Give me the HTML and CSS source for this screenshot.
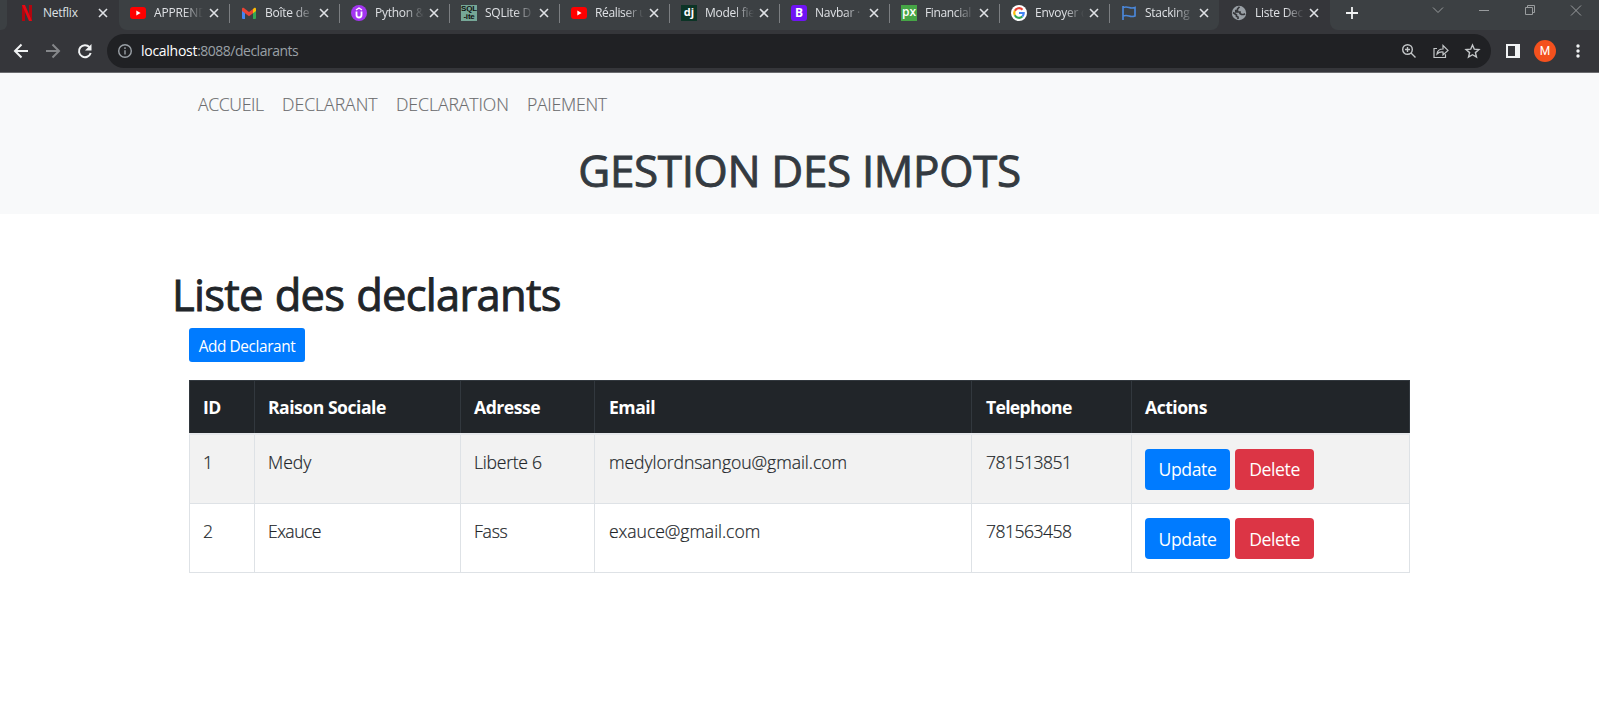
FILE: index.html
```html
<!DOCTYPE html>
<html lang="fr">
<head>
<meta charset="utf-8">
<title>Liste Declarants</title>
<link rel="stylesheet" href="styles.css">
</head>
<body>
<div class="browser">
  <div class="tabs">
    <div class="lead"></div>
    <div class="tab current first"><span class="fav"><svg width="16" height="16" viewBox="0 0 16 16"><path d="M2 0h3v16H2zM9 0h3v16H9z" fill="#b1060f"/><path d="M2 0h3l7 16H9z" fill="#e50914"/></svg></span><span class="name short">Netflix</span><svg class="x" viewBox="0 0 10 10"><path d="M1 1l8 8M9 1L1 9"/></svg></div>
    <div class="group">
    <div class="tab"><span class="fav"><svg width="16" height="16" viewBox="0 0 16 16"><rect x="-1" y="2" width="16" height="12" rx="3" fill="#f00"/><path d="M5.300 5.400L9.600 8l-4.300 2.600z" fill="#fff"/></svg></span><span class="name caps">APPREND</span><svg class="x" viewBox="0 0 10 10"><path d="M1 1l8 8M9 1L1 9"/></svg></div>
    <div class="tab"><span class="fav"><svg width="16" height="16" viewBox="0 0 16 16"><path d="M1 4h3v10H2a1 1 0 0 1-1-1z" fill="#4285f4"/><path d="M12 4h3v9a1 1 0 0 1-1 1h-2z" fill="#34a853"/><path d="M12 4l1.400-1.200Q15 2.200 15 4v2l-3 2.200z" fill="#fbbc04"/><path d="M4 8.200L1 6V4q0-1.800 1.600-1.200L8 7l4-3v4.200l-4 3z" fill="#ea4335"/></svg></span><span class="name">Boîte de</span><svg class="x" viewBox="0 0 10 10"><path d="M1 1l8 8M9 1L1 9"/></svg></div>
    <div class="tab"><span class="fav"><svg width="16" height="16" viewBox="0 0 16 16"><circle cx="8" cy="8" r="8" fill="#a435f0"/><path d="M5 5l3-2 3 2" fill="none" stroke="#fff" stroke-width="1.300"/><path d="M5.500 6.500v3.500q0 2.500 2.500 2.500t2.500-2.500V6.500" fill="none" stroke="#fff" stroke-width="1.800"/></svg></span><span class="name">Python &amp;</span><svg class="x" viewBox="0 0 10 10"><path d="M1 1l8 8M9 1L1 9"/></svg></div>
    <div class="tab"><span class="fav sql"><b>SQL</b><b>-ite</b></span><span class="name">SQLite D</span><svg class="x" viewBox="0 0 10 10"><path d="M1 1l8 8M9 1L1 9"/></svg></div>
    <div class="tab"><span class="fav"><svg width="16" height="16" viewBox="0 0 16 16"><rect y="2" width="16" height="12" rx="3" fill="#f00"/><path d="M6.300 5.400L10.600 8l-4.300 2.600z" fill="#fff"/></svg></span><span class="name tight">Réaliser u</span><svg class="x" viewBox="0 0 10 10"><path d="M1 1l8 8M9 1L1 9"/></svg></div>
    <div class="tab"><span class="fav dj">dj</span><span class="name">Model fie</span><svg class="x" viewBox="0 0 10 10"><path d="M1 1l8 8M9 1L1 9"/></svg></div>
    <div class="tab"><span class="fav bs">B</span><span class="name">Navbar ·</span><svg class="x" viewBox="0 0 10 10"><path d="M1 1l8 8M9 1L1 9"/></svg></div>
    <div class="tab"><span class="fav px">px</span><span class="name tight">Financial</span><svg class="x" viewBox="0 0 10 10"><path d="M1 1l8 8M9 1L1 9"/></svg></div>
    <div class="tab"><span class="fav"><svg width="16" height="16" viewBox="0 0 16 16"><circle cx="8" cy="8" r="8" fill="#fff"/><g fill="none" stroke-width="2.200"><path d="M11.500 4.700A4.800 4.800 0 0 0 3.800 5.700" stroke="#ea4335"/><path d="M3.800 5.700a4.800 4.800 0 0 0 0 4.600" stroke="#fbbc05"/><path d="M3.800 10.300a4.800 4.800 0 0 0 7.500 1.200" stroke="#34a853"/><path d="M11.300 11.500A4.800 4.800 0 0 0 12.700 8H8" stroke="#4285f4"/></g></svg></span><span class="name">Envoyer d</span><svg class="x" viewBox="0 0 10 10"><path d="M1 1l8 8M9 1L1 9"/></svg></div>
    <div class="tab nosep"><span class="fav"><svg width="16" height="16" viewBox="0 0 16 16"><path d="M2 1v14M2 2.500q3-1 6 0t6 0v8.500q-3 1-6 0t-6 0" fill="none" stroke="#4a86d8" stroke-width="1.700"/></svg></span><span class="name">Stacking</span><svg class="x" viewBox="0 0 10 10"><path d="M1 1l8 8M9 1L1 9"/></svg></div>
    </div>
    <div class="tab current last"><span class="fav"><svg width="16" height="16" viewBox="0 0 16 16"><circle cx="8" cy="8" r="7.200" fill="#9aa0a6"/><path d="M8.500 1.800L6.500 4v1.500H4.800V7H9v1.500l1.500 1h2.300l1.200-.8M2 7.500l3.500 2.500v1.500L7 12v2" fill="none" stroke="#35363a" stroke-width="1.700"/></svg></span><span class="name">Liste Dec</span><svg class="x" viewBox="0 0 10 10"><path d="M1 1l8 8M9 1L1 9"/></svg></div>
    <div class="tail">
      <svg class="plus" viewBox="0 0 12 12"><path d="M6 0v12M0 6h12"/></svg>
      <svg class="win" viewBox="0 0 160 20"><path d="M5 7.500l5 5 5-5M51 10.500h10M97.500 7.500h7v7h-7zM99.500 7.500v-2h7v7h-2M143 5.500l10 10M153 5.500l-10 10"/></svg>
    </div>
  </div>
  <div class="toolbar">
    <svg class="navicons" viewBox="0 0 90 20"><g fill="none" stroke-width="2"><path d="M15 10H2M8.500 3.500L2 10l6.500 6.500" stroke="#f1f3f4"/><path d="M33 10h13M39.500 3.500L46 10l-6.500 6.500" stroke="#85878a"/><path d="M76.500 6.200A6 6 0 1 0 77.700 12" stroke="#f1f3f4"/></g><path d="M78.500 3v6.500H72z" fill="#f1f3f4"/></svg>
    <div class="address">
      <svg class="info" viewBox="0 0 16 16"><circle cx="8" cy="8" r="6.300"/><path d="M8 7.200v4.300M8 4.300v1.600"/></svg>
      <span class="url"><em>localhost</em>:8088/declarants</span>
      <svg class="acts" viewBox="0 0 80 16"><g fill="none" stroke="#c4c7c9" stroke-width="1.400"><circle cx="6.500" cy="6.500" r="4.800"/><path d="M10 10l4.500 4.500M4 6.500h5M6.500 4v5"/><path d="M36 5.500H33v9h11.500v-3.200M36 11q.500-5 6-5V2.500l5 4.900-5 4.600V9q-4-.300-6 2z" stroke-width="1.200"/><path d="M71.500 2l1.800 4.200 4.600.400-3.500 3 1.100 4.500-4-2.400-4 2.400 1.100-4.500-3.500-3 4.600-.400z"/></g></svg>
    </div>
    <svg class="panel" viewBox="0 0 14 14"><path d="M1 1h12v12H1z" fill="none" stroke="#f1f3f4" stroke-width="2"/><path d="M9 1h4v12H9z" fill="#f1f3f4"/></svg>
    <span class="avatar">M</span>
    <svg class="dots" viewBox="0 0 4 14"><circle cx="2" cy="2" r="1.700"/><circle cx="2" cy="7" r="1.700"/><circle cx="2" cy="12" r="1.700"/></svg>
  </div>
</div>
<header class="header">
  <nav class="menu"><a class="m1">ACCUEIL</a><a class="m2">DECLARANT</a><a class="m3">DECLARATION</a><a class="m4">PAIEMENT</a></nav>
  <h1 class="brand">GESTION DES IMPOTS</h1>
</header>
<main class="content">
  <h1 class="title">Liste des declarants</h1>
  <a class="btn small">Add Declarant</a>
  <table class="list">
    <colgroup><col class="c1"><col class="c2"><col class="c3"><col class="c4"><col class="c5"><col class="c6"></colgroup>
    <thead><tr><th>ID</th><th>Raison Sociale</th><th>Adresse</th><th>Email</th><th class="tel">Telephone</th><th>Actions</th></tr></thead>
    <tbody>
      <tr><td>1</td><td>Medy</td><td class="city">Liberte 6</td><td>medylordnsangou@gmail.com</td><td class="num">781513851</td><td><div class="actions"><a class="btn update">Update</a><a class="btn delete">Delete</a></div></td></tr>
      <tr><td>2</td><td class="num">Exauce</td><td class="city">Fass</td><td>exauce@gmail.com</td><td class="num">781563458</td><td><div class="actions"><a class="btn update">Update</a><a class="btn delete">Delete</a></div></td></tr>
    </tbody>
  </table>
</main>
</body>
</html>
```
FILE: styles.css
```css
* { box-sizing: border-box; }
body { margin: 0; height: 710px; overflow: hidden; background: #fff; color: #212529; font-family: "Open Sans", sans-serif; font-size: 17.6px; }
.browser { height: 73px; background: #35363a; border-bottom: 1px solid #6b6c6f; }
.tabs { display: flex; height: 30px; background: #35363a; }
.lead { width: 7px; background: #3c4043; border-radius: 0 0 6px 0; }
.group { display: flex; flex: none; width: 1100px; background: #3c4043; border-radius: 0 0 8px 8px; }
.tail { display: flex; flex: 1; background: #3c4043; border-radius: 0 0 0 8px; }
.tab { position: relative; flex: none; display: flex; width: 110px; height: 30px; padding: 5px 0 0 12px; }
.group .tab:not(.nosep)::after { content: ""; position: absolute; right: -1px; top: 4px; width: 1px; height: 19px; background: #7b7e81; }
.tab.first { width: 112px; padding-left: 13px; }
.tab.last { width: 111px; }
.fav { flex: none; width: 16px; height: 16px; overflow: hidden; }
.fav svg { display: block; overflow: visible; }
.tab:first-child .fav { overflow: visible; }
.name { flex: none; width: 49px; height: 18px; margin: -1px 6px 0 8px; overflow: hidden; white-space: nowrap; font-size: 12px; line-height: 18px; letter-spacing: -0.25px; color: #dfe1e5; -webkit-mask-image: linear-gradient(90deg, #000 60%, transparent); mask-image: linear-gradient(90deg, #000 60%, transparent); }
.name.short { margin-left: 7px; margin-right: 7px; -webkit-mask-image: none; mask-image: none; }
.name.caps { margin-left: 7px; margin-right: 7px; letter-spacing: -0.15px; }
.name.tight { letter-spacing: -0.35px; }
.x { flex: none; width: 10px; height: 10px; margin: 3px 0 0 -1px; fill: none; stroke: #dfe1e5; stroke-width: 1.6; }
.sql { background: #76a797; color: #111; }
.sql b { display: block; height: 8px; font: 700 8px/8px "Liberation Sans", sans-serif; letter-spacing: -0.2px; text-align: center; }
.dj { background: #0c3426; color: #fff; font: 700 11px/14px "Open Sans", sans-serif; text-align: center; }
.bs { background: #7013f5; color: #fff; border-radius: 3px; font: 700 12px/16px "Open Sans", sans-serif; text-align: center; }
.px { background: #46a546; color: #fff; font: 600 12px/13px "Open Sans", sans-serif; text-align: center; }
.plus { width: 12px; height: 12px; margin: 7px 0 0 16px; stroke: #f1f3f4; stroke-width: 1.8; }
.win { width: 160px; height: 20px; margin: 0 11px 0 auto; fill: none; stroke: #999c9e; stroke-width: 1; }
.toolbar { display: flex; align-items: center; height: 42px; padding: 0 19px 0 13px; }
.navicons { flex: none; width: 90px; height: 20px; }
.address { flex: none; display: flex; align-items: center; width: 1384px; height: 34px; margin-left: 4px; padding: 0 10px; border-radius: 17px; background: #202124; }
.info { width: 16px; height: 16px; fill: none; stroke: #9aa0a6; stroke-width: 1.4; }
.url { margin-left: 8px; font-size: 14px; line-height: 20px; letter-spacing: -0.5px; color: #9aa0a6; white-space: nowrap; }
.url em { font-style: normal; letter-spacing: -0.28px; color: #fff; }
.acts { width: 80px; height: 16px; margin-left: auto; }
.panel { flex: none; width: 14px; height: 14px; margin-left: 15px; }
.avatar { flex: none; width: 22px; height: 22px; margin-left: 14px; border-radius: 50%; background: #f4511e; color: #fff; font: 400 12px/22px Roboto, sans-serif; text-align: center; }
.dots { flex: none; width: 4px; height: 14px; margin-left: 20px; fill: #f1f3f4; }
.header { height: 141px; background: #f8f9fa; }
.menu { display: flex; height: 64px; padding-left: 198px; font-weight: 300; line-height: 63px; color: #6c6d6f; white-space: nowrap; -webkit-text-stroke: 0.15px; }
.m1 { width: 84px; letter-spacing: -0.35px; }
.m2 { width: 114px; letter-spacing: 0; }
.m3 { width: 131px; letter-spacing: -0.05px; }
.m4 { letter-spacing: -0.25px; }
.brand, .title { margin: 0; font-size: 44px; font-weight: 400; line-height: 53px; white-space: nowrap; -webkit-text-stroke: 0.9px; }
.brand { padding-top: 7px; text-align: center; letter-spacing: -0.35px; color: #343a40; }
.content { padding: 54px 189px 0; }
.title { margin-left: -17px; padding-bottom: 1px; font-size: 43.5px; letter-spacing: -0.75px; word-spacing: 1.5px; }
.btn { display: flex; align-items: center; justify-content: center; border-radius: 4px; background: #007bff; color: #fff; font-weight: 400; letter-spacing: -0.4px; white-space: nowrap; }
.btn.small { width: 116px; height: 34px; margin-top: 6px; padding-top: 3px; font-size: 15.4px; border-radius: 3px; }
.list { width: 1220px; margin-top: 18px; border-collapse: collapse; table-layout: fixed; white-space: nowrap; }
.c1 { width: 65px; } .c2 { width: 206px; } .c3 { width: 134px; } .c4 { width: 377px; } .c5 { width: 160px; } .c6 { width: 278px; }
th, td { padding: 13px 13px 0; text-align: left; vertical-align: top; line-height: 26px; border: 1px solid #dee2e6; }
th:nth-child(4), td:nth-child(4), th:nth-child(5), td:nth-child(5) { padding-left: 14px; }
th { height: 53px; background: #212529; color: #fff; border-color: #32383e; border-bottom: 2px solid #e6e8eb; font-weight: 700; letter-spacing: -0.5px; }
th.tel { letter-spacing: -0.7px; }
td { height: 69px; padding-top: 14px; font-weight: 300; -webkit-text-stroke: 0.2px; letter-spacing: -0.06px; }
td.num { letter-spacing: -0.55px; }
td.city { letter-spacing: -0.25px; }
td .btn { -webkit-text-stroke: 0; }
tbody tr:first-child { background: #f2f2f2; }
tbody tr:first-child td { height: 70px; }
.actions { display: flex; gap: 5px; }
.update { width: 85px; height: 41px; }
.delete { width: 79px; height: 41px; background: #dc3545; }
```
